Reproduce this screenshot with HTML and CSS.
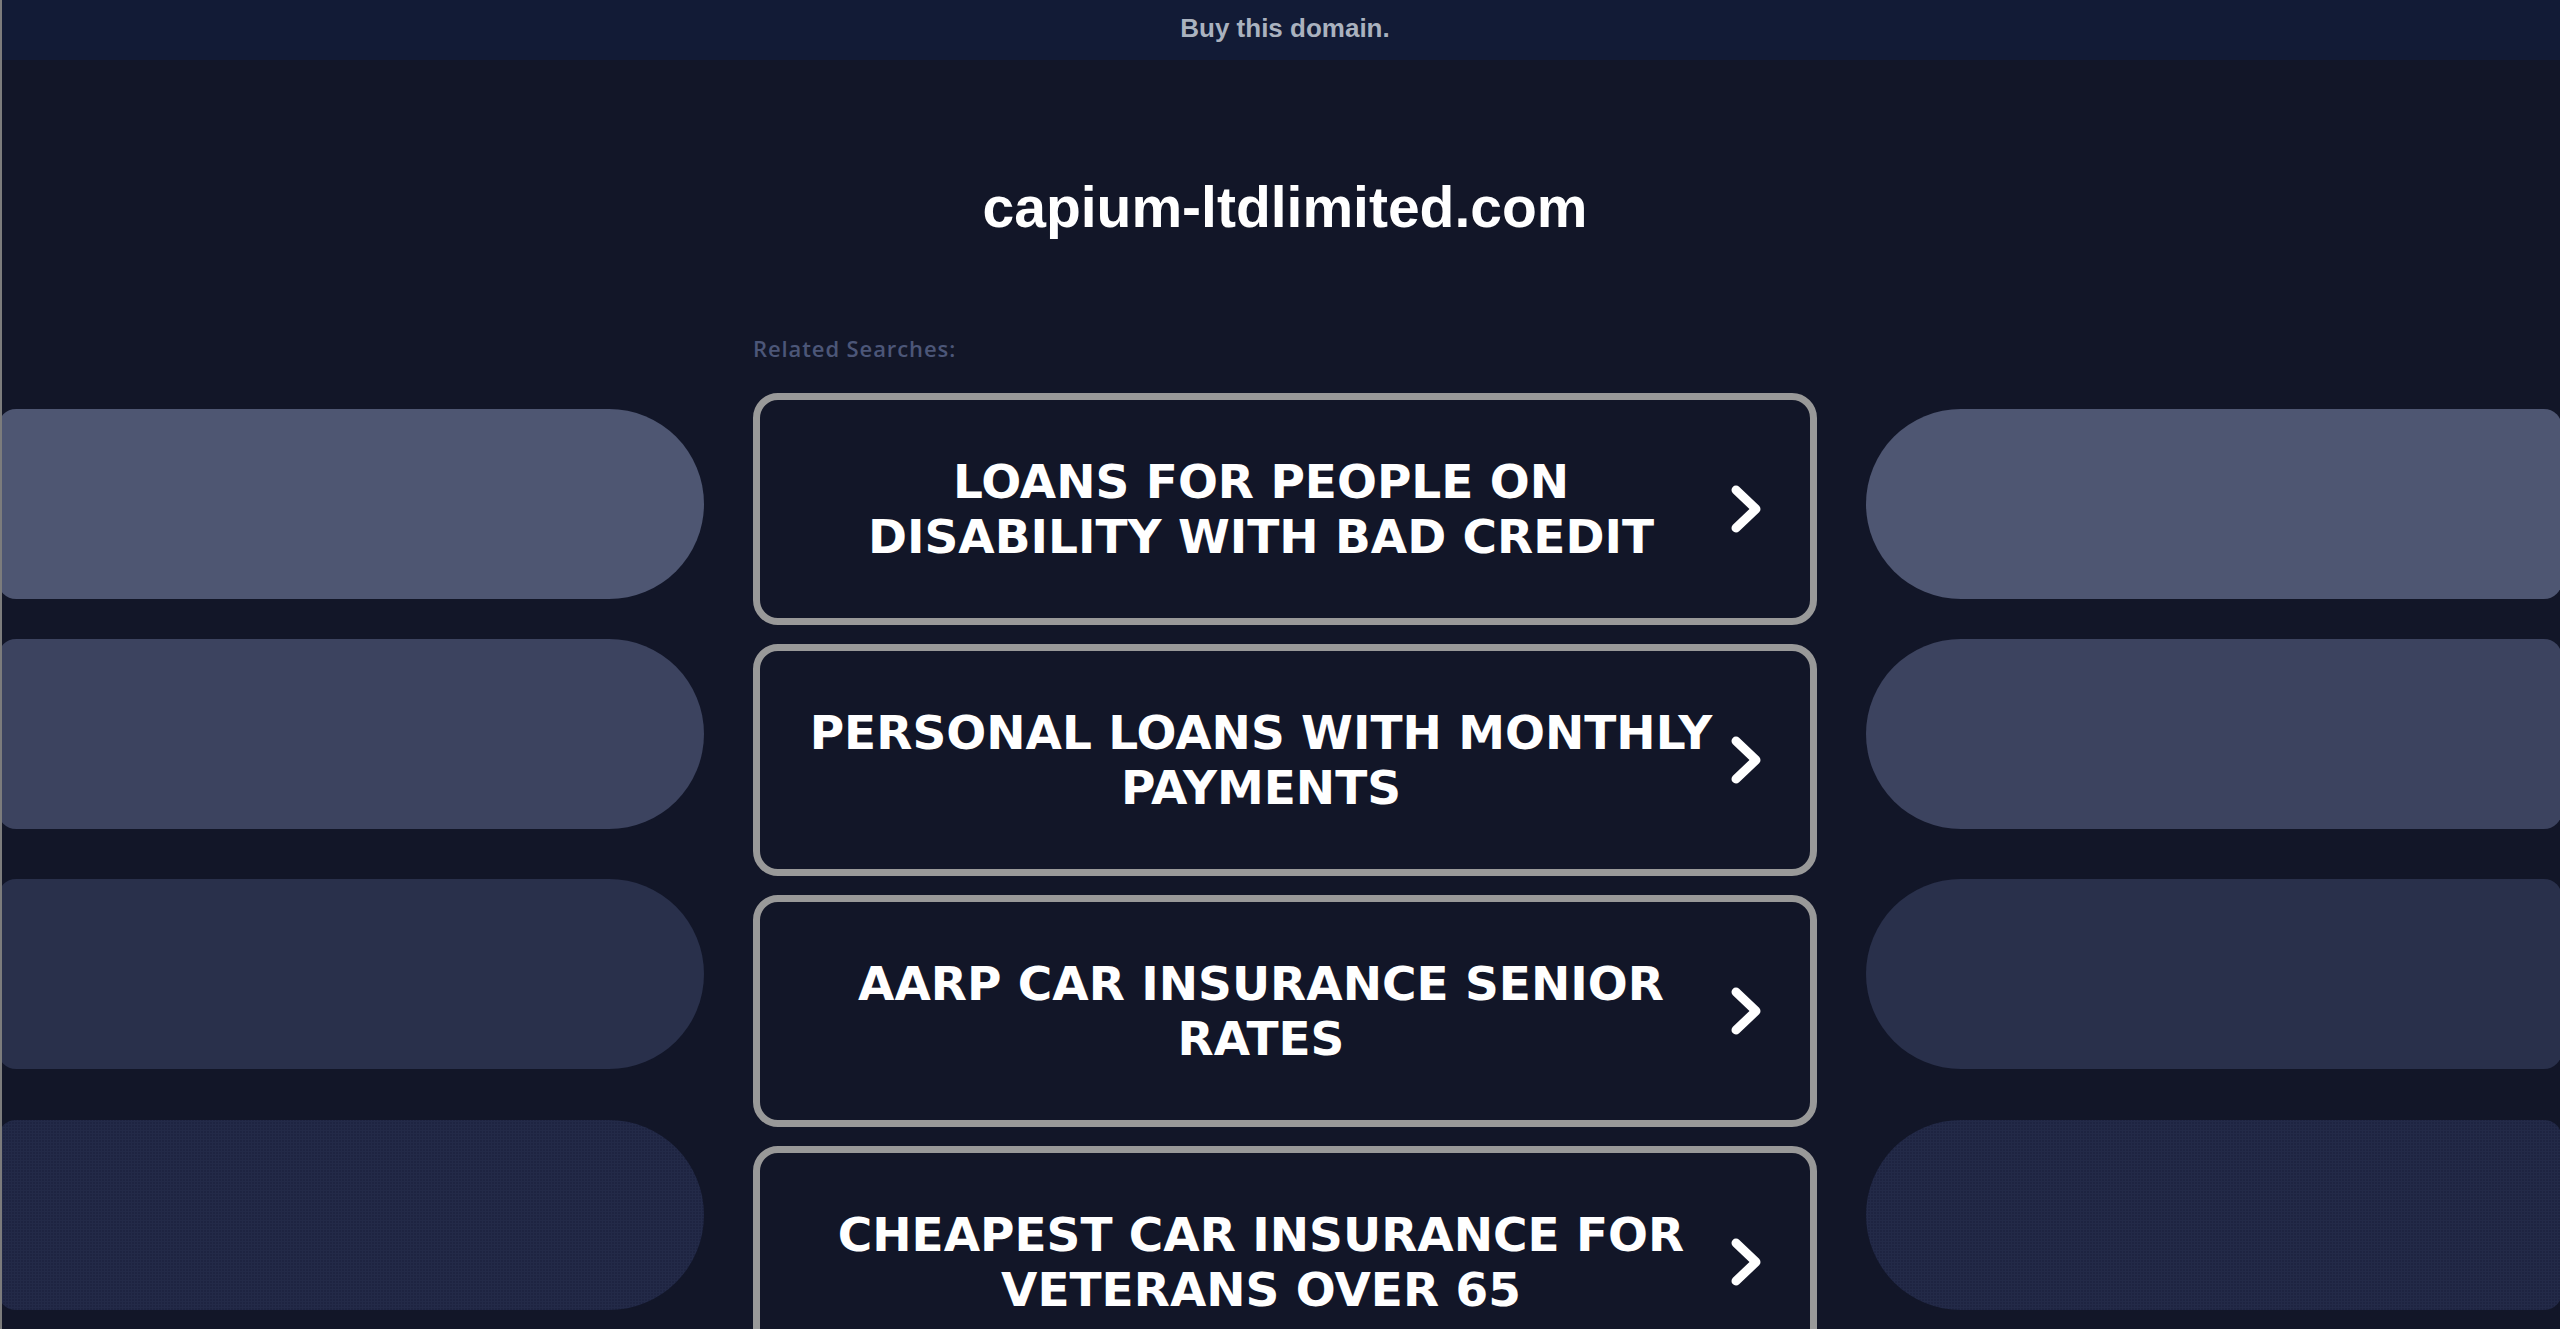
FILE: index.html
```html
<!DOCTYPE html>
<html lang="en">
<head>
<meta charset="utf-8">
<title>capium-ltdlimited.com</title>
<link rel="stylesheet" href="styles.css">
</head>
<body>
<div class="topbar">Buy this domain.</div>
<div class="layout">
  <div class="side side-left">
    <div class="pill pill-1"></div>
    <div class="pill pill-2"></div>
    <div class="pill pill-3"></div>
    <div class="pill pill-4"></div>
  </div>
  <main class="center">
    <h1 class="title">capium-ltdlimited.com</h1>
    <div class="related-label">Related Searches:</div>
    <div class="list">
      <a class="card" href="#">
        <span class="card-text">LOANS FOR PEOPLE ON<br>DISABILITY WITH BAD CREDIT</span>
        <svg class="chev" viewBox="0 0 32 50" width="32" height="50"><polyline points="6,6 26,25 6,44" fill="none" stroke="#fff" stroke-width="9" stroke-linecap="round" stroke-linejoin="round"/></svg>
      </a>
      <a class="card" href="#">
        <span class="card-text">PERSONAL LOANS WITH MONTHLY<br>PAYMENTS</span>
        <svg class="chev" viewBox="0 0 32 50" width="32" height="50"><polyline points="6,6 26,25 6,44" fill="none" stroke="#fff" stroke-width="9" stroke-linecap="round" stroke-linejoin="round"/></svg>
      </a>
      <a class="card" href="#">
        <span class="card-text">AARP CAR INSURANCE SENIOR<br>RATES</span>
        <svg class="chev" viewBox="0 0 32 50" width="32" height="50"><polyline points="6,6 26,25 6,44" fill="none" stroke="#fff" stroke-width="9" stroke-linecap="round" stroke-linejoin="round"/></svg>
      </a>
      <a class="card" href="#">
        <span class="card-text">CHEAPEST CAR INSURANCE FOR<br>VETERANS OVER 65</span>
        <svg class="chev" viewBox="0 0 32 50" width="32" height="50"><polyline points="6,6 26,25 6,44" fill="none" stroke="#fff" stroke-width="9" stroke-linecap="round" stroke-linejoin="round"/></svg>
      </a>
    </div>
  </main>
  <div class="side side-right">
    <div class="pill pill-1"></div>
    <div class="pill pill-2"></div>
    <div class="pill pill-3"></div>
    <div class="pill pill-4"></div>
  </div>
</div>
</body>
</html>
```
FILE: styles.css
```css
html, body {
  margin: 0;
  padding: 0;
  height: 100%;
  overflow: hidden;
  background: #121628;
}

body {
  box-sizing: border-box;
  border-left: 2px solid #7c7c7c;
}

.topbar {
  height: 60px;
  padding-left: 8px;
  background: #121b36;
  color: #aab2bf;
  font-family: "Liberation Sans", Arial, sans-serif;
  font-weight: bold;
  font-size: 26px;
  line-height: 56px;
  text-align: center;
}

.layout {
  display: grid;
  grid-template-columns: 702px 1064px 1fr;
  column-gap: 49px;
}

.side {
  display: flex;
  flex-direction: column;
  padding-top: 349px;
}

.pill {
  height: 190px;
  flex: none;
}

.side-left .pill {
  margin-left: -4px;
  width: 706px;
  border-radius: 18px 95px 95px 18px;
}

.side-right .pill {
  width: 696px;
  border-radius: 95px 18px 18px 95px;
}

.pill-1 { background: #4e5672; margin-bottom: 40px; }
.pill-2 { background: #3c435f; margin-bottom: 50px; }
.pill-3 { background: #29304b; margin-bottom: 51px; }
.pill-4 {
  background-color: #1e2441;
  background-image: radial-gradient(rgba(120, 135, 180, 0.06) 1px, transparent 1.2px);
  background-size: 3px 3px;
}

.center {
  padding-top: 114px;
}

.title {
  margin: 0;
  color: #ffffff;
  font-family: "Liberation Sans", Arial, sans-serif;
  font-weight: bold;
  font-size: 57px;
  line-height: 66px;
  text-align: center;
}

.related-label {
  margin-top: 94px;
  color: #4c5678;
  font-family: "Open Sans", "Liberation Sans", sans-serif;
  font-weight: 600;
  font-size: 22px;
  letter-spacing: 0.9px;
  line-height: 28px;
}

.list {
  margin-top: 31px;
  display: flex;
  flex-direction: column;
  gap: 19px;
}

.card {
  display: flex;
  align-items: center;
  box-sizing: border-box;
  height: 232px;
  padding: 0 48px 0 32px;
  border: 7px solid #999999;
  border-radius: 25px;
  background: #121628;
  color: #ffffff;
  text-decoration: none;
}

.card-text {
  flex: 1;
  text-align: center;
  font-family: "DejaVu Sans", Verdana, sans-serif;
  font-weight: bold;
  font-size: 47px;
  line-height: 55px;
}

.chev {
  flex: none;
  display: block;
}
```
